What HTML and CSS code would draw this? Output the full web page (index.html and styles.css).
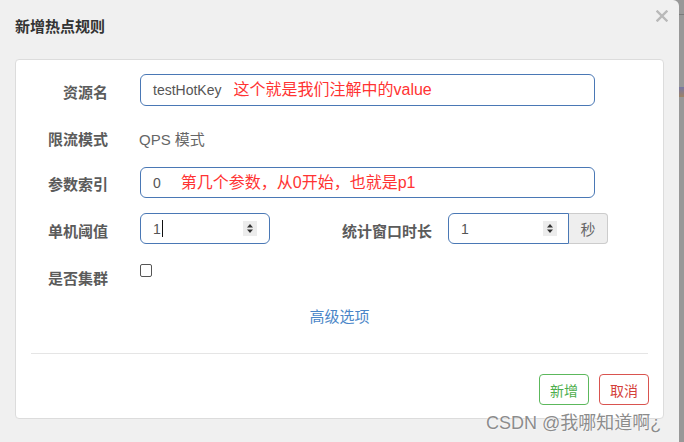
FILE: index.html
```html
<!DOCTYPE html>
<html lang="zh-CN">
<head>
<meta charset="utf-8">
<title>新增热点规则</title>
<link rel="stylesheet" href="styles.css">
</head>
<body>
<div class="screen">
  <div class="modal">
    <div class="modal-header">
      <h4 class="modal-title">新增热点规则</h4>
      <span class="close" aria-label="关闭">
        <svg width="12" height="12" viewBox="0 0 12 12"><path d="M1.5 1.5 L10.5 10.5 M10.5 1.5 L1.5 10.5" stroke="#b9b9b9" stroke-width="2.4" stroke-linecap="square" fill="none"/></svg>
      </span>
    </div>
    <div class="card">
      <div class="form">
        <div class="row row-first">
          <label class="label">资源名</label>
          <div class="field field-wide"><span class="val">testHotKey</span><span class="note note-a">这个就是我们注解中的value</span></div>
        </div>
        <div class="row row-static">
          <label class="label">限流模式</label>
          <div class="static">QPS 模式</div>
        </div>
        <div class="row">
          <label class="label label-idx">参数索引</label>
          <div class="field field-wide"><span class="val">0</span><span class="note note-b">第几个参数，从0开始，也就是p1</span></div>
        </div>
        <div class="row">
          <label class="label">单机阈值</label>
          <div class="field field-num"><span class="val">1</span><span class="caret"></span>
            <svg class="spin" width="14" height="15" viewBox="0 0 14 15"><rect width="14" height="15" fill="#ececec"/><path d="M4 6.5 L10 6.5 L7 3 Z M4 8.5 L10 8.5 L7 12 Z" fill="#333"/></svg>
          </div>
          <label class="label label-mid">统计窗口时长</label>
          <div class="group">
            <div class="field field-num2"><span class="val">1</span>
              <svg class="spin" width="14" height="15" viewBox="0 0 14 15"><rect width="14" height="15" fill="#ececec"/><path d="M4 6.5 L10 6.5 L7 3 Z M4 8.5 L10 8.5 L7 12 Z" fill="#333"/></svg>
            </div>
            <span class="addon">秒</span>
          </div>
        </div>
        <div class="row row-check">
          <label class="label label-check">是否集群</label>
          <span class="checkbox"></span>
        </div>
      </div>
      <div class="advanced"><a class="advanced-link">高级选项</a></div>
      <div class="divider"></div>
      <div class="footer">
        <button class="btn btn-ok">新增</button>
        <button class="btn btn-cancel">取消</button>
      </div>
    </div>
  </div>
  <div class="strip"><span class="strip-line"></span><span class="strip-icon"></span></div>
</div>
<div class="watermark">CSDN @我哪知道啊¿</div>
</body>
</html>
```

FILE: styles.css
```css
html, body {
  margin: 0;
  padding: 0;
}
body {
  width: 684px;
  height: 442px;
  overflow: hidden;
  background: #989898;
  font-family: "Liberation Sans", "Noto Sans CJK SC", sans-serif;
  position: relative;
}
.screen {
  display: flex;
  height: 442px;
}
.modal {
  width: 679px;
  flex: none;
  background: #f0f0f0;
  border-top-right-radius: 6px;
  height: 442px;
}
.modal-header {
  height: 59px;
  display: flex;
  justify-content: space-between;
  align-items: flex-start;
}
.modal-title {
  margin: 17px 0 0 15px;
  font-size: 15px;
  line-height: 20px;
  font-weight: bold;
  color: #333;
}
.close {
  margin: 10px 11px 0 0;
  width: 12px;
  height: 12px;
  display: block;
}
.close svg { display: block; }

.card {
  margin: 0 15px;
  background: #fff;
  border: 1px solid #dcdcdc;
  border-radius: 4px;
  padding: 14px 0 13px;
}
.form {
  display: flex;
  flex-direction: column;
  gap: 15px;
}
.row {
  display: flex;
  align-items: flex-start;
  height: 31px;
}
.row-first { height: 32px; }
.row-check { height: 30px; }
.label {
  width: 92px;
  flex: none;
  margin-right: 32px;
  text-align: right;
  font-size: 15px;
  line-height: 20px;
  padding-top: 9px;
  font-weight: bold;
  color: #5b5b5b;
}
.label-idx { padding-top: 8px; }
.label-check { padding-top: 10px; }
.label-mid {
  width: 92px;
  margin-left: 70px;
  margin-right: 16px;
}
.static {
  font-size: 15px;
  line-height: 20px;
  padding-top: 9px;
  color: #666;
  margin-left: -1px;
}
.field {
  box-sizing: border-box;
  height: 31px;
  border: 1px solid #4a78b5;
  border-radius: 6px;
  background: #fff;
  display: flex;
  align-items: center;
  padding: 0 12px;
}
.row-first .field { height: 32px; }
.field-wide { width: 455px; }
.val {
  font-size: 14px;
  color: #555;
  line-height: 20px;
}
.note {
  font-size: 16px;
  line-height: 20px;
  color: #ff3333;
}
.note-a { margin-left: 12px; }
.note-b { margin-left: 20px; }
.caret {
  width: 1px;
  height: 17px;
  background: #111;
  margin-left: 1px;
}
.spin {
  margin-left: auto;
  display: block;
}
.field-num { width: 130px; }
.group {
  display: flex;
}
.field-num2 {
  width: 121px;
  border-radius: 6px 0 0 6px;
  padding-right: 11px;
}
.addon {
  box-sizing: border-box;
  width: 39px;
  height: 31px;
  background: #eee;
  border: 1px solid #ccc;
  border-left: 0;
  border-radius: 0 4px 4px 0;
  display: flex;
  align-items: center;
  justify-content: center;
  font-size: 15px;
  color: #666;
}
.checkbox {
  box-sizing: border-box;
  width: 12px;
  height: 13px;
  margin-top: 5px;
  border: 1px solid #555;
  border-radius: 2px;
  background: #fff;
}
.advanced {
  margin-top: 18px;
  display: flex;
  justify-content: center;
}
.advanced-link {
  font-size: 15px;
  line-height: 20px;
  color: #4a86c8;
}
.divider {
  margin: 26px 15px 0;
  height: 1px;
  background: #e5e5e5;
}
.footer {
  margin-top: 20px;
  display: flex;
  justify-content: flex-end;
  gap: 10px;
  padding-right: 14px;
}
.btn {
  box-sizing: border-box;
  width: 50px;
  height: 31px;
  background: #fff;
  border-radius: 4px;
  font-family: "Liberation Sans", "Noto Sans CJK SC", sans-serif;
  font-size: 14px;
  padding: 0;
}
.btn-ok {
  border: 1px solid #5cb85c;
  color: #4cae4c;
}
.btn-cancel {
  border: 1px solid #d9534f;
  color: #d43f3a;
}
.strip {
  flex: 1;
  display: flex;
  flex-direction: column;
}
.strip-line {
  margin-top: 14px;
  height: 1px;
  background: #7a7a7a;
}
.strip-icon {
  margin-top: 72px;
  height: 10px;
  background: linear-gradient(#6a6aa8, #a07a50);
  opacity: 0.7;
}
.watermark {
  position: absolute;
  left: 486px;
  top: 412px;
  font-size: 18px;
  line-height: 22px;
  color: #8c8c8c;
  text-shadow: 0 0 2px #fff, 0 0 1px #fff;
  white-space: nowrap;
}
```
